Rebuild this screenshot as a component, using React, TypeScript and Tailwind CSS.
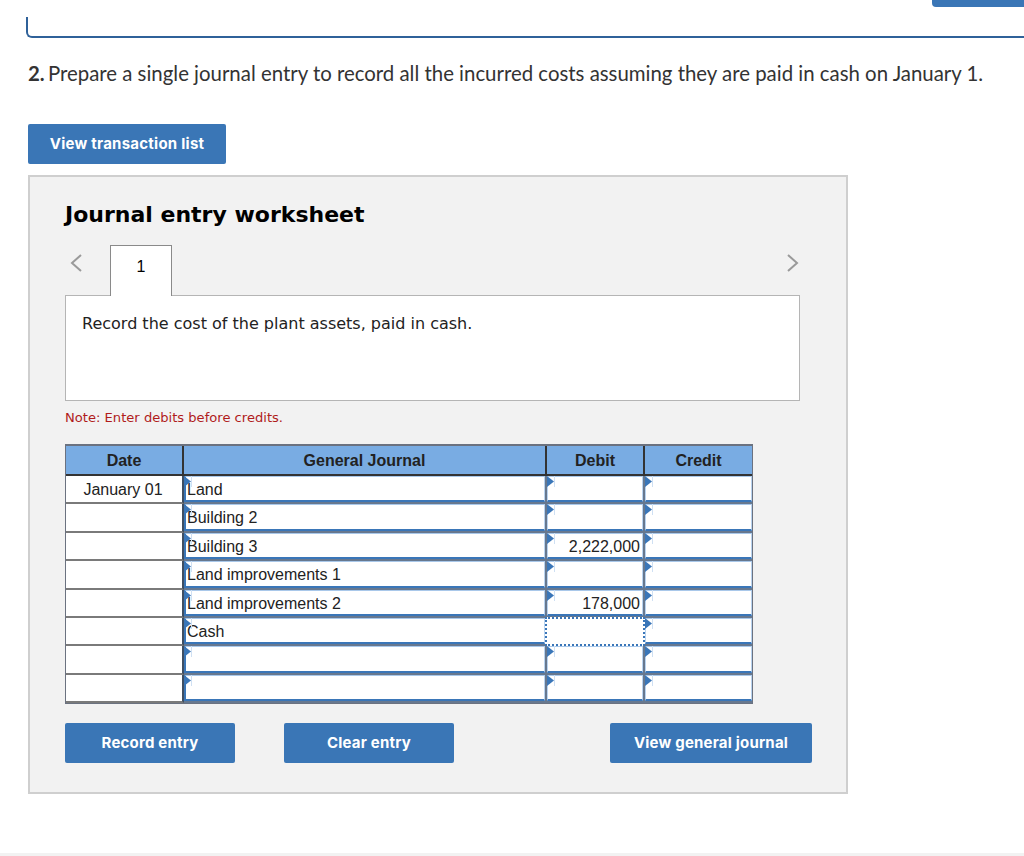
import React from "react";

const rows: { date?: string; acct?: string; debit?: string; focus?: boolean }[] = [
  { date: "January 01", acct: "Land" },
  { acct: "Building 2" },
  { acct: "Building 3", debit: "2,222,000" },
  { acct: "Land improvements 1" },
  { acct: "Land improvements 2", debit: "178,000" },
  { acct: "Cash", focus: true },
  {},
  {},
];

function Tri() {
  return (
    <svg className="absolute left-0 top-0" width="8" height="11" viewBox="0 0 8 11">
      <path d="M0 0 L7 5.5 L0 11 Z" fill="#3a76b8" />
      <path d="M7.5 0 V11" stroke="#cfe0f3" strokeWidth="1" />
    </svg>
  );
}

function InputCell({ text, right, focus, strong, last }: { text?: string; right?: boolean; focus?: boolean; strong?: boolean; last?: boolean }) {
  return (
    <div className={`relative border-b-2 border-[#67788f] min-h-0 min-w-0 ${last ? "" : "border-r-2"}`}>
      {focus ? (
        <div className="absolute -left-[2px] -right-[2px] -top-[1px] -bottom-[2px] z-10 bg-white border-2 border-dotted border-[#3a76b8]" />
      ) : (
        <div
          className={`relative h-full w-full bg-white border-t border-t-[#a9c8ea] border-b-2 border-b-[#3a76b8] border-r border-r-[#b9d3ef] ${strong ? "border-l-2 border-l-[#3a76b8]" : "border-l border-l-[#b9d3ef]"} ${right ? "pr-[2px] text-right" : "pl-[1px] text-left"} text-[16px] leading-[26px] text-[#222] overflow-hidden whitespace-nowrap`}
        >
          {text}
        </div>
      )}
      {!focus && <Tri />}
    </div>
  );
}

function Btn({ label, w }: { label: string; w: string }) {
  return (
    <button className={`${w} h-10 rounded-[2px] bg-[#3a76b6] pt-[1px] text-white text-[15px] tracking-[0.2px] font-bold font-['Inter','Liberation_Sans',sans-serif]`}>
      {label}
    </button>
  );
}

export default function App() {
  return (
    <div className="relative h-[856px] w-[1024px] overflow-hidden bg-white font-['Liberation_Sans',sans-serif]">
      <div className="flex items-start pl-[26px]">
        <div className="mt-[17px] h-[21px] flex-1 rounded-bl-[6px] border-b-2 border-l-2 border-[#2f6199]" />
      </div>
      <div className="absolute right-0 top-0 h-[7px] w-[92px] rounded-bl-[4px] bg-[#3a76b6]" />

      <p className="ml-[28px] mt-[23px] h-[24px] whitespace-nowrap text-[20.4px] leading-[24px] text-[#333] font-['Lato',sans-serif]">
        <b className="mr-[-2px]">2.</b> Prepare a single journal entry to record all the incurred costs assuming they are paid in cash on January 1.
      </p>

      <button className="ml-[28px] mt-[39px] block h-[40px] w-[198px] rounded-[2px] bg-[#3a76b6] pt-[1px] text-[15px] tracking-[0.25px] font-bold text-white font-['Inter',sans-serif]">
        View transaction list
      </button>

      <div className="ml-[28px] mt-[11px] h-[619px] w-[820px] border-2 border-[#cfcfcf] bg-[#f2f2f2] pl-[35px] font-['DejaVu_Sans',sans-serif]">
        <h2 className="mt-[22px] h-[32px] text-[22px] font-bold leading-[32px] text-black">Journal entry worksheet</h2>

        <div className="mt-[14px] flex h-[50px] w-[735px] items-start">
          <svg className="mt-[9px] ml-[4px]" width="14" height="18" viewBox="0 0 14 18" fill="none" stroke="#9a9a9a" strokeWidth="2">
            <path d="M12 1 L3 9 L12 17" />
          </svg>
          <div className="relative z-10 ml-[27px] flex h-[51px] w-[62px] items-center justify-center border border-b-0 border-[#8a8a8a] bg-white pb-[8px] text-[16px] text-black font-['Liberation_Sans',sans-serif]">
            1
          </div>
          <svg className="ml-auto mt-[9px]" width="14" height="18" viewBox="0 0 14 18" fill="none" stroke="#9a9a9a" strokeWidth="2">
            <path d="M2 1 L11 9 L2 17" />
          </svg>
        </div>

        <div className="h-[106px] w-[735px] border border-[#b5b5b5] bg-white px-[16px] pt-[17px] text-[16px] leading-[22px] text-[#222]">
          Record the cost of the plant assets, paid in cash.
        </div>

        <p className="mt-[9px] h-[16px] text-[13.1px] leading-[16px] text-[#b01c1c]">Note: Enter debits before credits.</p>

        <div className="mt-[18px] w-[688px] border border-[#6b7280] border-t-2 bg-[#f2f2f2] font-['Liberation_Sans',sans-serif]">
          <div className="grid h-[30px] grid-cols-[118px_363px_98px_107px] border-b-2 border-[#333] bg-[#79ace3] text-center text-[16px] font-bold leading-[29px] text-[#222]">
            <div className="border-r-2 border-[#333]">Date</div>
            <div className="border-r-2 border-[#333]">General Journal</div>
            <div className="border-r-2 border-[#333]">Debit</div>
            <div>Credit</div>
          </div>
          {rows.map((r, i) => (
            <div key={i} className="grid h-[28.4px] grid-cols-[118px_363px_98px_107px] grid-rows-[28.4px]">
              <div className="min-h-0 overflow-hidden border-r-2 border-r-[#3f4f63] border-b-2 border-b-[#7a7a7a] bg-white pr-[2px] text-center text-[16px] leading-[28px] text-[#222]">{r.date}</div>
              <InputCell text={r.acct} strong />
              <InputCell text={r.debit} right focus={r.focus} />
              <InputCell last />
            </div>
          ))}
        </div>

        <div className="mt-[19px] flex w-[747px]">
          <Btn label="Record entry" w="w-[170px]" />
          <div className="ml-[49px]"><Btn label="Clear entry" w="w-[170px]" /></div>
          <div className="ml-auto"><Btn label="View general journal" w="w-[202px]" /></div>
        </div>
      </div>

      <div className="absolute bottom-0 left-0 h-[3px] w-full bg-[#f2f2f2]" />
    </div>
  );
}
